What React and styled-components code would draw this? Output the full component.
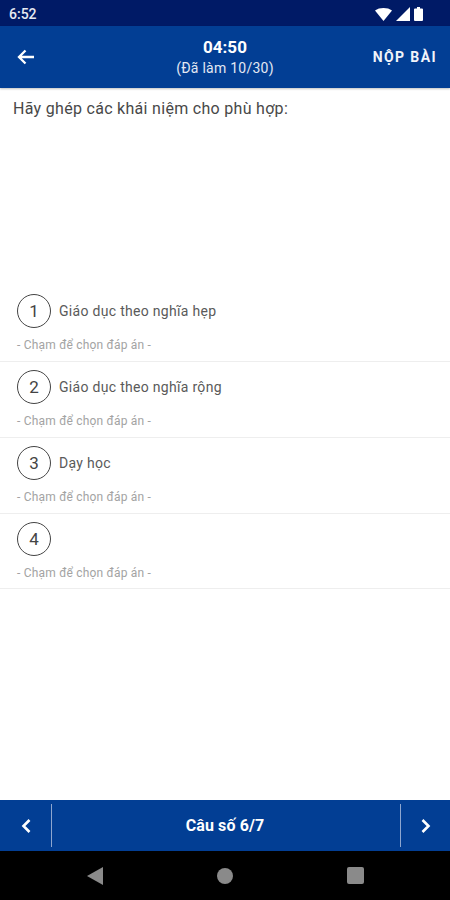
import React from 'react';
import styled, { createGlobalStyle } from 'styled-components';

const items = [
    { id: 1, label: 'Giáo dục theo nghĩa hẹp' },
    { id: 2, label: 'Giáo dục theo nghĩa rộng' },
    { id: 3, label: 'Dạy học' },
    { id: 4, label: '' },
];

const App = () => {
    return (
        <Screen>
            <GlobalStyle />
            <StatusBar>
                <Clock>6:52</Clock>
                <StatusIcons>
                    <svg width="17" height="13" viewBox="0 0 17 13">
                        <path d="M0 2.5C2.3 .8 5.2 0 8.5 0s6.200 .8 8.500 2.500L8.500 13z" fill="#fff" />
                    </svg>
                    <svg width="14" height="14" viewBox="0 0 14 14">
                        <path d="M14 0v14H0z" fill="#fff" />
                    </svg>
                    <svg width="9" height="14" viewBox="0 0 9 14">
                        <path d="M3 0h3v1.500h2a1 1 0 0 1 1 1V13a1 1 0 0 1-1 1H1a1 1 0 0 1-1-1V2.500a1 1 0 0 1 1-1h2z" fill="#fff" />
                    </svg>
                </StatusIcons>
            </StatusBar>

            <Header>
                <BackButton>
                    <svg width="18" height="16" viewBox="0 0 18 16">
                        <path d="M17 8H2.500M8.500 1.500 2 8l6.500 6.500" fill="none" stroke="#fff" strokeWidth="2.300" />
                    </svg>
                </BackButton>
                <TimerBlock>
                    <Timer>04:50</Timer>
                    <Progress>(Đã làm 10/30)</Progress>
                </TimerBlock>
                <Submit>NỘP BÀI</Submit>
            </Header>

            <Content>
                <Prompt>Hãy ghép các khái niệm cho phù hợp:</Prompt>
                <List>
                    {items.map((item) => (
                        <Row key={item.id}>
                            <RowTop>
                                <Badge>{item.id}</Badge>
                                <Label>{item.label}</Label>
                            </RowTop>
                            <Hint>- Chạm để chọn đáp án -</Hint>
                        </Row>
                    ))}
                </List>
            </Content>

            <Pager>
                <PagerButton>
                    <svg width="12" height="16" viewBox="0 0 12 16">
                        <path d="M9.500 2 3.500 8l6 6" fill="none" stroke="#fff" strokeWidth="2.600" />
                    </svg>
                </PagerButton>
                <PagerTitle>Câu số 6/7</PagerTitle>
                <PagerButton $right>
                    <svg width="12" height="16" viewBox="0 0 12 16">
                        <path d="M2.500 2l6 6-6 6" fill="none" stroke="#fff" strokeWidth="2.600" />
                    </svg>
                </PagerButton>
            </Pager>

            <NavBar>
                <svg width="16" height="18" viewBox="0 0 16 18">
                    <path d="M16 0v18L0 9z" fill="#8a8a8a" />
                </svg>
                <svg width="16" height="16" viewBox="0 0 16 16">
                    <circle cx="8" cy="8" r="8" fill="#8a8a8a" />
                </svg>
                <svg width="17" height="17" viewBox="0 0 17 17">
                    <rect width="17" height="17" rx="2" fill="#8a8a8a" />
                </svg>
            </NavBar>
        </Screen>
    );
};

const GlobalStyle = createGlobalStyle`
    html, body {
        margin: 0;
        padding: 0;
        background: #fff;
    }
    * {
        box-sizing: border-box;
    }
`;

const Screen = styled.div`
    display: flex;
    flex-direction: column;
    width: 450px;
    height: 900px;
    overflow: hidden;
    background: #fff;
    font-family: Roboto, "Liberation Sans", sans-serif;
`;

const StatusBar = styled.div`
    display: flex;
    justify-content: space-between;
    align-items: center;
    height: 26px;
    padding: 2px 27px 0 9px;
    background: #001a66;
`;

const Clock = styled.span`
    color: #e6e9f2;
    font-size: 14px;
    font-weight: 500;
`;

const StatusIcons = styled.div`
    display: flex;
    align-items: center;
    gap: 4px;
`;

const Header = styled.header`
    display: grid;
    grid-template-columns: 1fr auto 1fr;
    align-items: center;
    height: 62px;
    padding: 0 13px;
    background: #023e94;
    box-shadow: 0 1px 2px rgba(0, 0, 0, 0.25);
`;

const BackButton = styled.div`
    display: flex;
    align-items: center;
    padding-left: 4px;
`;

const TimerBlock = styled.div`
    display: flex;
    flex-direction: column;
    align-items: center;
    color: #fff;
`;

const Timer = styled.div`
    font-size: 17px;
    font-weight: 700;
    line-height: 20px;
`;

const Progress = styled.div`
    margin-top: 2px;
    font-size: 14px;
    line-height: 18px;
    letter-spacing: 0.25px;
    color: #e3e8f3;
`;

const Submit = styled.div`
    justify-self: end;
    color: #f1f4fa;
    font-size: 14px;
    font-weight: 700;
    letter-spacing: 1.400px;
`;

const Content = styled.main`
    flex: 1;
    display: flex;
    flex-direction: column;
`;

const Prompt = styled.div`
    height: 198px;
    padding: 11px 13px 0;
    color: #484848;
    font-size: 16px;
    line-height: 20px;
    letter-spacing: 0.3px;
`;

const List = styled.div`
    display: flex;
    flex-direction: column;
`;

const Row = styled.div`
    display: flex;
    flex-direction: column;
    height: 76px;
    padding: 8px 17px 0;
    border-bottom: 1px solid #eeeeee;

    &:last-child {
        height: 75px;
    }
`;

const RowTop = styled.div`
    display: flex;
    align-items: center;
    gap: 8px;
`;

const Badge = styled.div`
    display: flex;
    justify-content: center;
    align-items: center;
    width: 34px;
    height: 34px;
    border: 1px solid #444;
    border-radius: 50%;
    color: #444;
    font-size: 17px;
`;

const Label = styled.div`
    color: #5a5a5a;
    font-size: 14px;
    letter-spacing: 0.3px;
`;

const Hint = styled.div`
    margin-top: 9px;
    color: #a3a3a3;
    font-size: 12px;
    line-height: 16px;
    letter-spacing: 0.2px;
`;

const Pager = styled.div`
    display: flex;
    align-items: center;
    height: 51px;
    margin-top: auto;
    background: #023e94;
`;

const PagerButton = styled.div`
    display: flex;
    justify-content: center;
    align-items: center;
    width: ${(p) => (p.$right ? '50px' : '52px')};
    height: 43px;
    ${(p) => (p.$right ? 'border-left' : 'border-right')}: 1px solid #8ea6cf;
`;

const PagerTitle = styled.div`
    flex: 1;
    padding-right: 2px;
    color: #fff;
    text-align: center;
    font-size: 16px;
    font-weight: 700;
    letter-spacing: 0.1px;
`;

const NavBar = styled.nav`
    display: flex;
    justify-content: space-between;
    align-items: center;
    height: 49px;
    padding: 0 86px 0 87px;
    background: #000;
`;

export default App;
